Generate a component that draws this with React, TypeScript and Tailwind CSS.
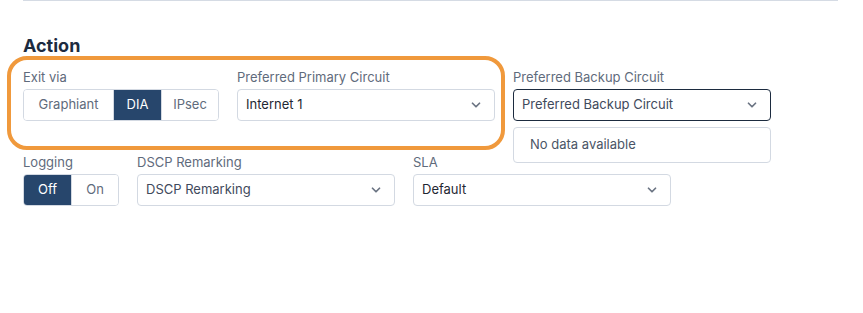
import { ChevronDown } from 'lucide-react';

const font = { fontFamily: 'Inter, "Open Sans", sans-serif' };

function Segmented({ options, active }: { options: { label: string; w: string }[]; active: string }) {
  return (
    <div className="flex h-8 rounded border border-[#d3d9e2] overflow-hidden">
      {options.map((o, i) => (
        <div
          key={o.label}
          className={`${o.w} flex items-center justify-center text-[13px] ${
            o.label === active ? 'bg-[#27466c] text-white' : 'bg-white text-[#5f6b7c]'
          } ${i > 0 ? 'border-l border-[#d3d9e2]' : ''}`}
        >
          {o.label}
        </div>
      ))}
    </div>
  );
}

function Select({ value, muted, focused }: { value: string; muted?: boolean; focused?: boolean }) {
  return (
    <div
      className={`w-[258px] h-8 rounded flex items-center justify-between pl-2 pr-[11px] bg-white border ${
        focused ? 'border-[#1c2b3f]' : 'border-[#d3d9e2]'
      }`}
    >
      <span className={`text-[13px] ${muted ? 'text-[#3f4a5c]' : 'text-[#1f2733]'}`}>{value}</span>
      <ChevronDown className="w-[14px] h-[14px] text-[#6b7483]" strokeWidth={3} />
    </div>
  );
}

function Field({ label, children }: { label: string; children: React.ReactNode }) {
  return (
    <div className="flex flex-col gap-[3px]">
      <span className="text-[13px] leading-[18px] text-[#5f6b7c]">{label}</span>
      {children}
    </div>
  );
}

export default function App() {
  return (
    <div className="relative w-[863px] h-[313px] bg-white" style={font}>
      <div className="ml-[23px] mr-[25px] border-t border-[#d5dbe4]" />
      <div className="px-[23px] pt-[33px]">
        <h2 className="text-[18px] leading-6 font-bold text-[#1c2b3f]">Action</h2>
        <div className="flex gap-[18px] mt-[10px]">
          <Field label="Exit via">
            <Segmented
              active="DIA"
              options={[
                { label: 'Graphiant', w: 'w-[89px]' },
                { label: 'DIA', w: 'w-[48px]' },
                { label: 'IPsec', w: 'w-[57px]' },
              ]}
            />
          </Field>
          <Field label="Preferred Primary Circuit">
            <Select value="Internet 1" />
          </Field>
          <Field label="Preferred Backup Circuit">
            <Select value="Preferred Backup Circuit" muted focused />
            <div className="w-[258px] h-[36px] mt-[3px] rounded border border-[#d3d9e2] flex items-center pl-4 text-[13px] text-[#4a5566]">
              No data available
            </div>
          </Field>
        </div>
        <div className="flex gap-[18px] -mt-[10px]">
          <Field label="Logging">
            <Segmented
              active="Off"
              options={[
                { label: 'Off', w: 'w-[47px]' },
                { label: 'On', w: 'w-[47px]' },
              ]}
            />
          </Field>
          <Field label="DSCP Remarking">
            <Select value="DSCP Remarking" muted />
          </Field>
          <Field label="SLA">
            <Select value="Default" />
          </Field>
        </div>
      </div>
      <div className="absolute left-[7px] top-[56px] w-[498px] h-[94px] rounded-[20px] border-4 border-[#f0993c] pointer-events-none" />
    </div>
  );
}
